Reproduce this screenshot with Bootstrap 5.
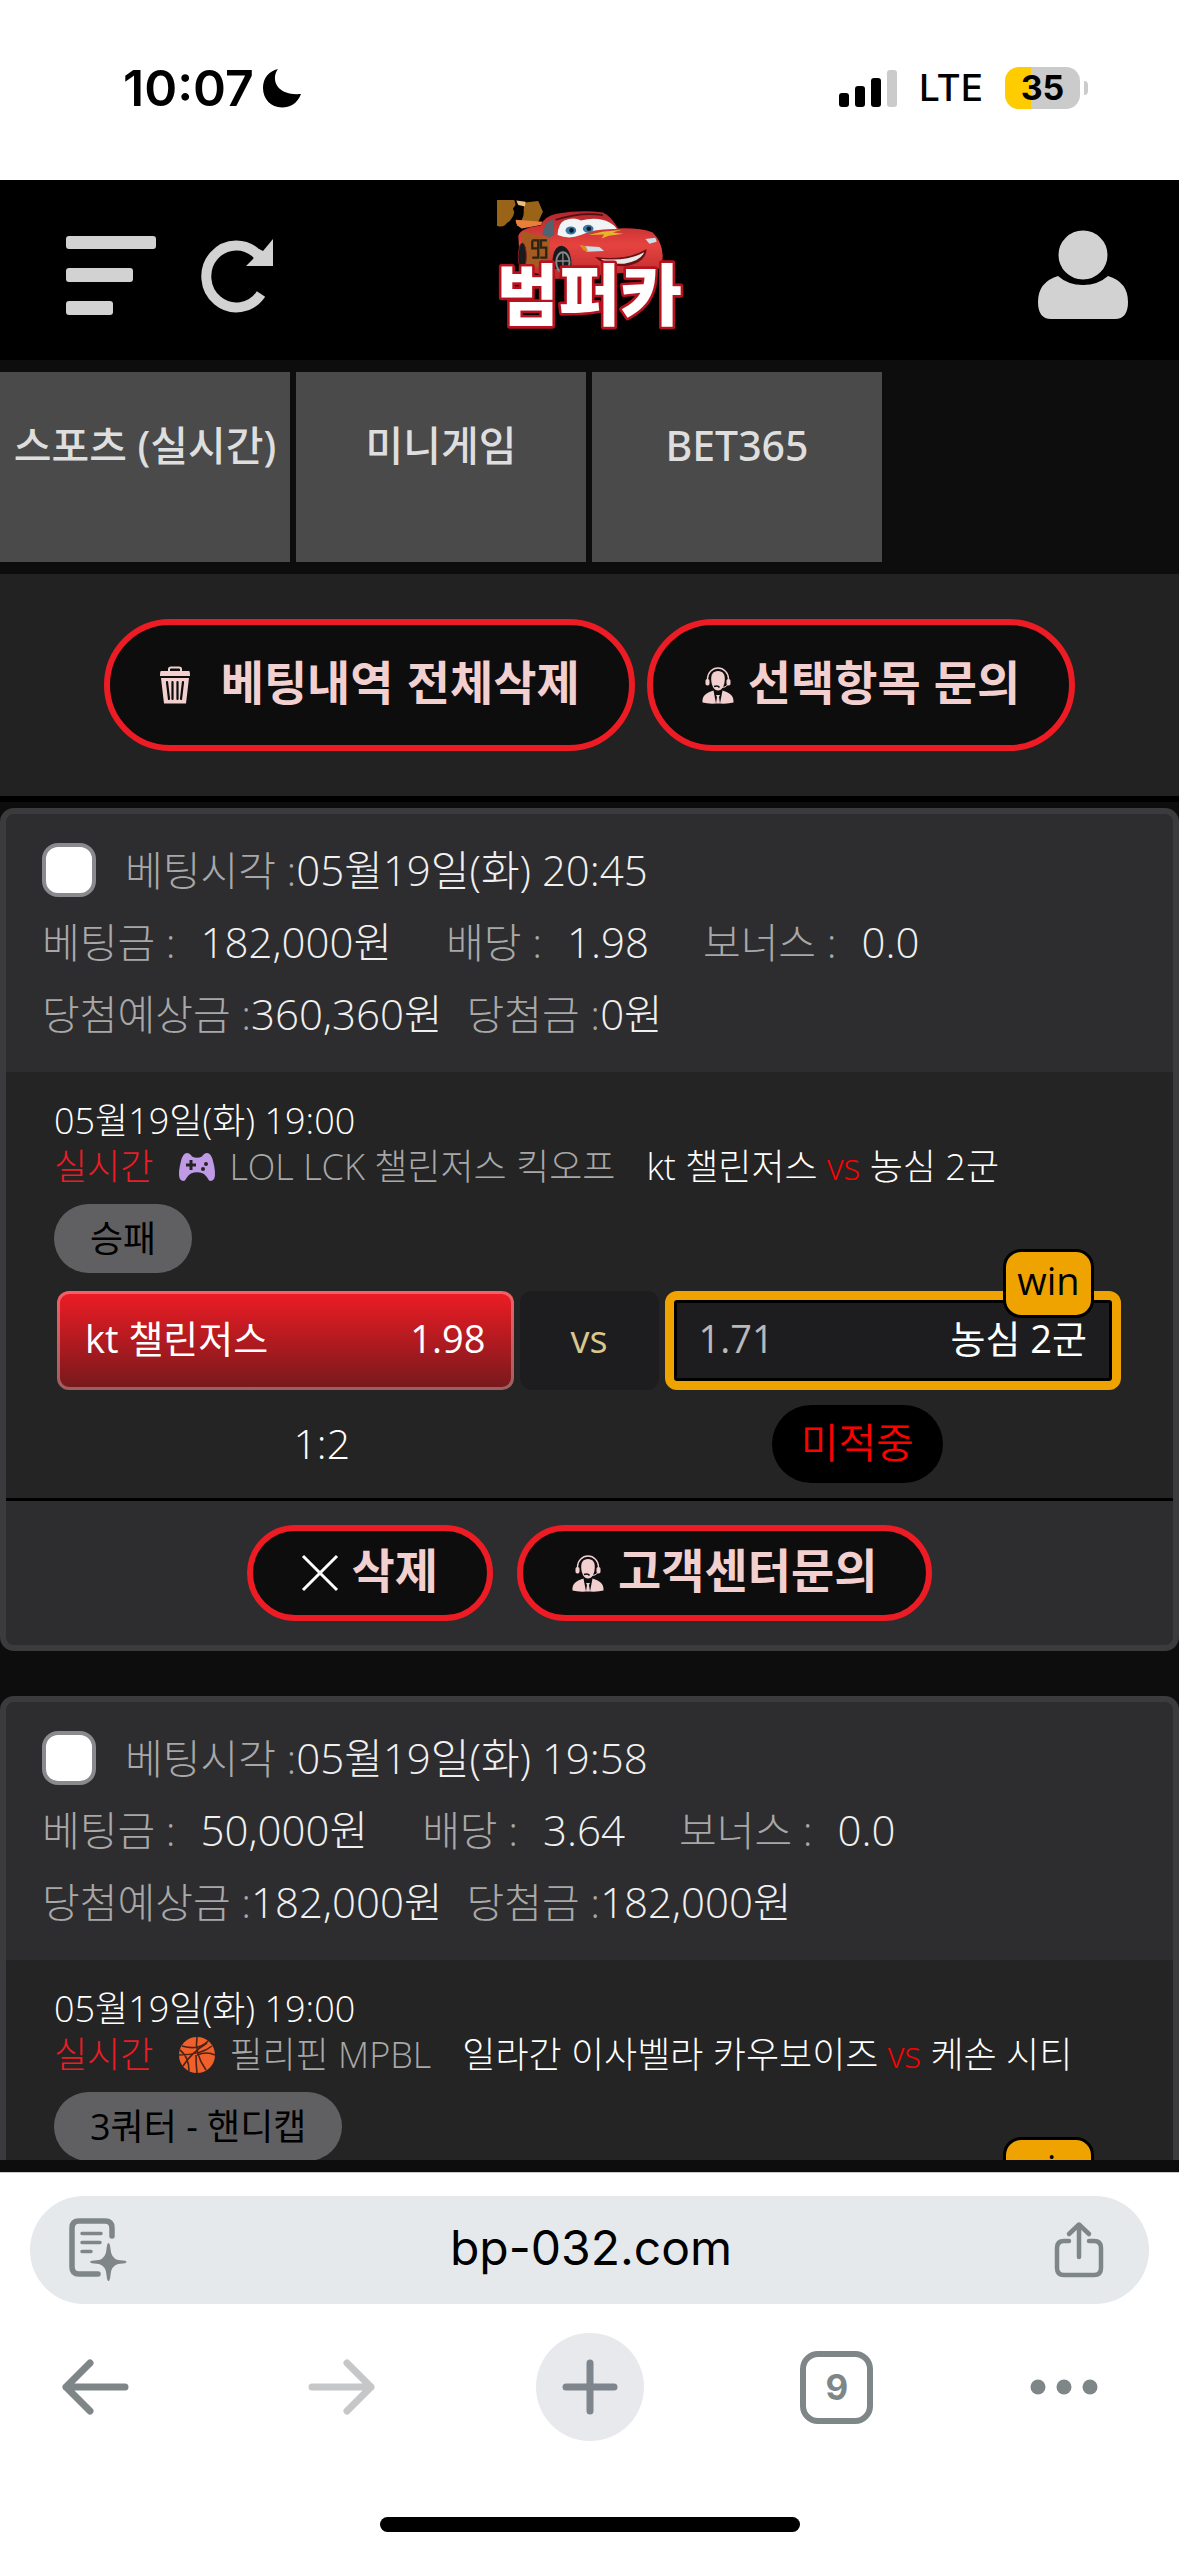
<!doctype html>
<html lang="ko">
<head>
<meta charset="utf-8">
<meta name="viewport" content="width=device-width, initial-scale=1">
<title>베팅내역</title>
<link href="https://cdn.jsdelivr.net/npm/bootstrap@5.3.0/dist/css/bootstrap.min.css" rel="stylesheet">
<style>
  body { font-family: "Open Sans", "Noto Sans CJK KR", sans-serif; background: #0d0d0d; color: #f0f0f0; line-height: 1.2; }
  .sys { font-family: Inter, "Liberation Sans", sans-serif; }
  button { font-family: inherit; }
  .plain { background: none; border: 0; padding: 0; line-height: 0; }
  svg { flex: none; display: block; overflow: visible; }

  .status-bar { height: 180px; padding: 0 91px 4px 123px; color: #000; }
  .clock { font-size: 50px; font-weight: 600; }
  .lte { font-size: 37px; font-weight: 500; margin: 0 22px; }
  .battery { width: 75px; height: 42px; border-radius: 14px; font-size: 34px; font-weight: 700; background: linear-gradient(90deg, #ffcc00 35%, #cbcbcb 35%); }
  .battery-tip { width: 4px; height: 14px; border-radius: 0 4px 4px 0; background: #cbcbcb; }

  .site-head { height: 180px; padding: 10px 51px 0; background: #000; }
  .site-head > div { flex: 1 1 0; }
  .head-left { gap: 45px; }
  .menu-btn { margin-left: 15px; }
  .logo-link { margin-bottom: 22px; }
  .tab-strip { padding: 12px 0; gap: 6px; }
  .tab-strip a { width: 290px; height: 190px; padding-top: 48px; background: #4a4a4a; color: #dedede; font-family: "Noto Sans", "Noto Sans CJK KR", sans-serif; font-size: 41px; font-weight: 500; line-height: 50px; }
  .tools { height: 228px; background: #222; border-bottom: 6px solid #000; gap: 12px; }

  .pill-btn { display: flex; align-items: center; height: 96px; border: 6px solid #ed1c24; border-radius: 66px; background: #0d0d0d; color: #f3d0d0; font-family: "Noto Sans CJK KR", sans-serif; font-size: 47px; font-weight: 700; line-height: 1; padding: 0 49px; gap: 14px; white-space: nowrap; }
  .pill-btn span { padding-bottom: 12px; }
  .pill-btn.tall { height: 132px; }

  .feed { min-height: 0; overflow: hidden; padding-top: 6px; border-bottom: 12px solid #0d0d0d; }
  .slip { flex: none; border: 6px solid #3b3b3d; border-radius: 14px; background: #2d2d2f; margin-bottom: 45px; }
  .slip-head { padding: 20px 36px 22px; font-size: 42px; font-weight: 300; white-space: nowrap; }
  .slip-head > div { height: 72px; display: flex; align-items: center; }
  .slip-head .key { color: #a8a8a8; font-size: 41px; }
  .slip-head .pair { display: flex; align-items: baseline; gap: 25px; margin-right: 54px; }
  .slip-head .pair.tight { gap: 0; margin-right: 24px; }
  .pick { width: 54px; height: 54px; appearance: none; background: #fff; border: 4px solid #8a8a8e; border-radius: 16px; margin-right: 29px; flex: none; }
  .event { background: #242424; padding: 27px 48px 15px; border-bottom: 3px solid #000; }
  .event-line { height: 45px; font-size: 36px; font-weight: 300; color: #fff; white-space: nowrap; line-height: 44px; }
  .live { color: #ed1c24; margin-right: 26px; }
  .league { color: #a8a8a8; margin: 0 31px 0 14px; }
  .red { color: #f00; }
  .market { display: flex; width: fit-content; align-items: center; height: 69px; margin: 15px 0 18px; padding: 0 36px; border-radius: 35px; background: #606063; color: #000; font-size: 36px; font-weight: 400; }
  .odds { display: grid; grid-template-columns: 1fr 139px 1fr; gap: 6px; padding: 0 4px 0 3px; font-size: 38px; }
  .side { position: relative; height: 99px; display: flex; align-items: center; justify-content: space-between; border-radius: 12px; padding: 0 25px 4px; color: #fff; border: 3px solid rgba(255,255,255,.3); white-space: nowrap; font-weight: 400; }
  .side.chosen { background: linear-gradient(#f01c24, #74191c) border-box; }
  .side.winner { border: 9px solid #eea300; background: #1d1d1f; box-shadow: inset 0 0 0 3px #000; }
  .side.winner .rate { color: #b9b9b9; }
  .versus { border-radius: 12px; background: #1d1d1f; color: #d9c78c; font-weight: 400; padding-bottom: 4px; }
  .win-tag { position: absolute; top: -51px; right: 18px; height: 69px; width: 91px; border: 3px solid #000; border-radius: 18px; background: #eea300; color: #000; display: flex; align-items: center; justify-content: center; font-size: 38px; padding-bottom: 6px; }
  .outcome { margin-top: 15px; font-size: 41px; font-weight: 300; color: #fff; }
  .miss { height: 78px; padding: 0 29px 2px; border-radius: 39px; background: #000; color: #f00; font-weight: 350; }
  .slip-foot { padding: 24px 0; gap: 24px; }

  .chrome { background: #fff; color: #000; border-top: 1px solid #c8c8c8; padding: 23px 30px 24px; }
  .address { height: 108px; border-radius: 54px; background: #e5e9ec; padding: 0 45px 0 38px; }
  .address input { min-width: 0; border: 0; background: none; font-size: 48px; color: #000; text-align: center; outline: 0; padding: 0 0 4px; }
  .chrome-nav { padding: 29px 11px 0; }
  .chrome-nav > div { width: 108px; height: 108px; display: flex; align-items: center; justify-content: center; }
  .chrome-nav > div:last-child { justify-content: flex-start; }
  .new-tab { width: 108px; height: 108px; border-radius: 50%; background: #e8e9ed; }
  .tab-count { width: 73px; height: 73px; border: 6px solid #7f8688; border-radius: 18px; color: #7f8688; font-size: 35px; font-weight: 700; background: none; padding: 0; }
  .home-bar { width: 420px; height: 15px; border-radius: 8px; background: #000; margin: 76px auto 0; }
</style>
<script src="https://cdn.jsdelivr.net/npm/bootstrap@5.3.0/dist/js/bootstrap.bundle.min.js"></script>
</head>
<body class="d-flex flex-column vh-100 overflow-hidden">

<svg width="0" height="0" class="position-absolute" aria-hidden="true">
  <symbol id="agent" viewBox="0 0 32 37">
    <g fill="none" stroke="currentColor"><path d="M5.500 14 V12 A10.500 11 0 0 1 26.500 12 V14" stroke-width="1.300"/><path d="M26 17.500 Q24 21 18 20.500" stroke-width="1"/></g>
    <rect x="3.500" y="12" width="4" height="6.500" rx="1.800" fill="currentColor"/><rect x="24.500" y="12" width="4" height="6.500" rx="1.800" fill="currentColor"/>
    <path fill="currentColor" d="M16 4 C11 4 9 7.500 9.200 12.500 C9.500 19 12 23.500 16 23.500 C20 23.500 22.500 19 22.800 12.500 C23 7.500 21 4 16 4Z"/>
    <path d="M12 19.500 Q16 18 17.500 20.500" stroke="#0d0d0d" stroke-width="1.500" fill="none"/>
    <path fill="currentColor" d="M11.500 23.500 L14 36.500 Q6 37 .5 35.500 C0 29 3.500 26 11.500 23.500Z M20.500 23.500 L18 36.500 Q26 37 31.500 35.500 C32 29 28.500 26 20.500 23.500Z M14 28 H18 L17 30 L18 36.500 H14 L15 30Z"/>
  </symbol>
</svg>

<div class="status-bar sys bg-white d-flex align-items-center justify-content-between flex-shrink-0">
  <div class="d-flex align-items-center gap-2">
    <span class="clock">10:07</span>
    <svg width="40" height="40" viewBox="0 0 40 40"><path d="M16 1 C9 10 13 28 39 26 C35 36 28 39.500 20 39.500 C9 39.500 1 31 1 20 C1 10 7 3 16 1Z"/></svg>
  </div>
  <div class="d-flex align-items-center">
    <svg width="58" height="38" viewBox="0 0 58 38"><rect y="24" width="10" height="14" rx="3"/><rect x="16" y="17" width="10" height="21" rx="3"/><rect x="32" y="9" width="10" height="29" rx="3"/><rect x="48" y="1" width="10" height="37" rx="3" fill="#cbcbcb"/></svg>
    <span class="lte">LTE</span>
    <span class="battery d-flex align-items-center justify-content-center">35</span>
    <span class="battery-tip ms-1"></span>
  </div>
</div>

<header class="site-head d-flex align-items-center flex-shrink-0">
  <div class="head-left d-flex align-items-center">
    <button class="plain menu-btn" type="button" aria-label="메뉴"><svg width="90" height="80" viewBox="0 0 90 80" fill="#d2d2d2"><rect y="1" width="90" height="13" rx="3"/><rect y="33" width="67" height="14" rx="3"/><rect y="66" width="47" height="14" rx="3"/></svg></button>
    <button class="plain" type="button" aria-label="새로고침"><svg width="72" height="74" viewBox="0 0 72 74"><path d="M60 56 A30 31 0 1 1 57 17" fill="none" stroke="#d2d2d2" stroke-width="10"/><path d="M72 1 V28 H45 L52 21 L58 11 L62 13Z" fill="#d2d2d2"/></svg></button>
  </div>
  <a href="#" class="logo-link" aria-label="범퍼카"><svg width="188" height="130" viewBox="45 60 565 390">
    <defs><linearGradient id="paint" x2="0" y2="1"><stop stop-color="#b3262c"/><stop offset=".5" stop-color="#e6433f"/><stop offset="1" stop-color="#ba2a2b"/></linearGradient></defs>
    <path d="M48 63 H100 L104 78 L96 88 L100 100 Q94 122 78 132 Q66 148 48 140Z M132 70 L172 66 L186 98 L172 128 L148 144 L106 140 Q132 120 128 92Z" fill="#9a6418"/>
    <path d="M106 64 L134 68 L132 82 L112 78Z" fill="#f0bd7a"/>
    <path d="M104 122 L185 128 L180 138 L122 148 Q104 140 104 122Z" fill="#e8803c"/>
    <path d="M112 170 Q120 146 178 140 Q190 112 226 104 Q300 92 366 100 Q388 108 412 148 Q480 146 516 160 Q546 190 546 232 Q546 262 530 272 L226 300 L118 270Z" fill="url(#paint)"/>
    <path d="M124 156 Q170 170 205 178 L206 216 L200 268 L138 262 Q116 210 124 156Z" fill="#a65a20"/>
    <path d="M154 184 H172 V236 H154 M154 184 V208 H172 M198 184 H180 V206 H196 V236 H178" fill="none" stroke="#2b2415" stroke-width="7"/>
    <path d="M184 166 Q190 128 218 120 L220 168 L204 176Z" fill="#50636e"/>
    <path d="M224 122 Q300 98 366 108" fill="none" stroke="#4a1216" stroke-width="5"/>
    <path d="M230 168 Q232 132 250 124 Q280 112 300 124 Q352 112 386 130 Q402 138 408 150 Q340 148 300 168 Q264 182 230 168Z" fill="#f1f4f5"/>
    <ellipse cx="270" cy="154" rx="16" ry="12" fill="#3a78a8"/><circle cx="272" cy="154" r="7" fill="#101a24"/><ellipse cx="322" cy="149" rx="16" ry="12" fill="#3a78a8"/><circle cx="324" cy="149" r="7" fill="#101a24"/>
    <path d="M322 168 L364 158 L424 152 L396 160 L428 164 L384 170 L362 178 L370 166Z" fill="#e5b52c"/>
    <path d="M298 200 L356 204 L370 216 L318 218Z" fill="#cfdde6"/><path d="M298 198 L314 202 L322 217 L308 214Z" fill="#d98b1d"/>
    <path d="M494 180 L524 176 L528 188 L506 194Z" fill="#cfdde6"/>
    <path d="M342 234 Q440 246 498 210 Q494 254 430 262 Q372 264 342 234Z" fill="#6b1115"/><path d="M360 240 Q440 248 490 220 Q480 246 430 254 Q380 256 360 240Z" fill="#e8e8e8"/>
    <path d="M214 270 Q212 202 242 200 Q274 206 272 270Z" fill="#181a1c"/><ellipse cx="246" cy="250" rx="20" ry="30" fill="none" stroke="#868a8d" stroke-width="6"/><path d="M246 222 V275 M228 246 H265" stroke="#868a8d" stroke-width="4"/>
    <ellipse cx="124" cy="232" rx="12" ry="40" fill="#181a1c" stroke="#7b1c20" stroke-width="3"/>
    <text x="47" y="422" font-family="Noto Sans CJK KR,sans-serif" font-weight="900" font-size="202" stroke-linejoin="round" fill="#fff" stroke="#b8121f" stroke-width="16" paint-order="stroke">범퍼카</text>
  </svg></a>
  <div class="d-flex justify-content-end">
    <button class="plain" type="button" aria-label="내 정보"><svg width="90" height="90" viewBox="0 0 90 90" fill="#d2d2d2"><path d="M20 46 Q30 55 45 55 Q60 55 70 46 Q90 52 90 72 Q90 89 77 89 H13 Q0 89 0 72 Q0 52 20 46Z"/><circle cx="45" cy="25" r="27" stroke="#000" stroke-width="5"/></svg></button>
  </div>
</header>

<nav class="tab-strip d-flex flex-shrink-0">
  <a href="#" class="text-decoration-none text-center text-nowrap">스포츠 (실시간)</a>
  <a href="#" class="text-decoration-none text-center">미니게임</a>
  <a href="#" class="text-decoration-none text-center">BET365</a>
</nav>

<div class="tools d-flex align-items-center justify-content-center flex-shrink-0">
  <button type="button" class="pill-btn tall"><svg width="32" height="38" viewBox="0 0 32 38" class="me-3"><path d="M10 5 V3 Q10 1.500 12 1.500 H20 Q22 1.500 22 3 V5" fill="none" stroke="currentColor" stroke-width="2"/><path d="M2 5 H30 Q31 5 31 10 H1 Q1 5 2 5Z M2 12 H30 L27 37.500 H5Z" fill="currentColor"/><path d="M8 16 L10 33 M13.500 16 V33 M18.500 16 V33 M24 16 L22 33" stroke="#0d0d0d" stroke-width="2.200" stroke-linecap="round"/></svg><span>베팅내역 전체삭제</span></button>
  <button type="button" class="pill-btn tall"><svg width="32" height="37"><use href="#agent"/></svg><span>선택항목 문의</span></button>
</div>

<main class="feed flex-grow-1 d-flex flex-column">
  <article class="slip">
    <div class="slip-head">
      <div><input type="checkbox" class="pick" id="p1"><label for="p1"><span class="key">베팅시각 :</span>05월19일(화) 20:45</label></div>
      <div><span class="pair"><span class="key">베팅금 :</span><span>182,000원</span></span><span class="pair"><span class="key">배당 :</span><span>1.98</span></span><span class="pair"><span class="key">보너스 :</span><span>0.0</span></span></div>
      <div><span class="pair tight"><span class="key">당첨예상금 :</span><span>360,360원</span></span><span class="pair tight"><span class="key">당첨금 :</span><span>0원</span></span></div>
    </div>
    <div class="event">
      <div class="event-line">05월19일(화) 19:00</div>
      <div class="event-line d-flex align-items-center"><span class="live">실시간</span><svg width="36" height="28" viewBox="0 0 36 28"><path d="M8 0 Q11 0 13 3.500 Q18 6 23 3.500 Q25 0 28 0 Q32 0 34 8 Q37 19 35.500 25 Q34 29 30 27.500 Q27 22 24 20.500 Q18 18 12 20.500 Q9 22 6 27.500 Q2 29 .5 25 Q-1 19 2 8 Q4 0 8 0Z" fill="#bf9be6"/><path d="M12 7 V17 M7 12 H17" stroke="#242424" stroke-width="3"/><circle cx="27" cy="11" r="2" fill="#242424"/><circle cx="24" cy="16" r="2" fill="#242424"/></svg><span class="league">LOL LCK 챌린저스 킥오프</span><span>kt 챌린저스 <span class="red">vs</span> 농심 2군</span></div>
      <span class="market">승패</span>
      <div class="odds">
        <button type="button" class="side chosen"><span>kt 챌린저스</span><span>1.98</span></button>
        <div class="versus d-flex align-items-center justify-content-center">vs</div>
        <button type="button" class="side winner"><span class="rate">1.71</span><span>농심 2군</span><span class="win-tag">win</span></button>
      </div>
      <div class="outcome row g-0 align-items-center text-center">
        <div class="col-6">1:2</div>
        <div class="col-6 d-flex justify-content-center"><span class="miss d-flex align-items-center">미적중</span></div>
      </div>
    </div>
    <div class="slip-foot d-flex justify-content-center">
      <button type="button" class="pill-btn"><svg width="36" height="36" viewBox="0 0 36 36"><path d="M1 1 L35 35 M35 1 L1 35" stroke="#fff" stroke-width="3"/></svg><span>삭제</span></button>
      <button type="button" class="pill-btn"><svg width="32" height="37"><use href="#agent"/></svg><span>고객센터문의</span></button>
    </div>
  </article>

  <article class="slip">
    <div class="slip-head">
      <div><input type="checkbox" class="pick" id="p2"><label for="p2"><span class="key">베팅시각 :</span>05월19일(화) 19:58</label></div>
      <div><span class="pair"><span class="key">베팅금 :</span><span>50,000원</span></span><span class="pair"><span class="key">배당 :</span><span>3.64</span></span><span class="pair"><span class="key">보너스 :</span><span>0.0</span></span></div>
      <div><span class="pair tight"><span class="key">당첨예상금 :</span><span>182,000원</span></span><span class="pair tight"><span class="key">당첨금 :</span><span>182,000원</span></span></div>
    </div>
    <div class="event">
      <div class="event-line">05월19일(화) 19:00</div>
      <div class="event-line d-flex align-items-center"><span class="live">실시간</span><svg width="36" height="36" viewBox="0 0 36 36"><circle cx="18" cy="18" r="18" fill="#f0602b"/><g fill="none" stroke="#4a2216" stroke-width="1.600"><path d="M18 0 Q15 16 27 33 M3 9 Q20 14 29 4 M0 18 Q22 18 33 9 M4 29 Q12 16 28 6 M10 34 Q10 20 1 13 M17 18 Q17 28 18 36 M18 18 Q28 14 36 18"/></g></svg><span class="league">필리핀 MPBL</span><span>일라간 이사벨라 카우보이즈 <span class="red">vs</span> 케손 시티</span></div>
      <span class="market">3쿼터 - 핸디캡</span>
      <div class="odds">
        <div class="side"></div>
        <div class="versus"></div>
        <div class="side winner"><span class="win-tag">win</span></div>
      </div>
    </div>
  </article>
</main>

<footer class="chrome sys flex-shrink-0">
  <div class="address d-flex align-items-center">
    <button class="plain" type="button" aria-label="읽기 도구"><svg width="60" height="64" viewBox="0 0 60 64"><g fill="none" stroke="#7f8688" stroke-linecap="round"><path d="M44 18 V10 Q44 3 37 3 H11 Q4 3 4 10 V49 Q4 56 11 56 H30" stroke-width="5.500"/><path d="M14 15.500 H33 M14 24.500 H32 M14 33.500 H23" stroke-width="3.500"/></g><path d="M40.500 25 Q42 25 42.500 31 Q43 40 50 42 L57 42.800 Q60 44 57 45.200 L50 46 Q43 48 42.500 57 Q42 63 40.500 63 Q39 63 38.500 57 Q38 48 31 46 L24 45.200 Q20 44 24 42.800 L31 42 Q38 40 38.500 31 Q39 25 40.500 25Z" fill="#7f8688"/></svg></button>
    <input class="flex-grow-1" type="text" value="bp-032.com" aria-label="주소">
    <button class="plain" type="button" aria-label="공유"><svg width="50" height="56" viewBox="0 0 50 56" fill="none" stroke="#7f8688" stroke-width="4.500" stroke-linecap="round" stroke-linejoin="round"><path d="M15 19 H10 Q3 19 3 26 V46 Q3 53 10 53 H40 Q47 53 47 46 V26 Q47 19 40 19 H35 M25 35 V3 M15 12 L25 2.500 L35 12"/></svg></button>
  </div>
  <div class="chrome-nav d-flex align-items-center justify-content-between">
    <div><button class="plain" type="button" aria-label="뒤로"><svg width="68" height="56" viewBox="0 0 68 56" fill="none" stroke="#7f8688" stroke-width="7" stroke-linecap="round" stroke-linejoin="round"><path d="M64 28 H5 M29 4 L5 28 L29 52"/></svg></button></div>
    <div><button class="plain" type="button" aria-label="앞으로"><svg width="68" height="56" viewBox="0 0 68 56" fill="none" stroke="#c6c7c8" stroke-width="7" stroke-linecap="round" stroke-linejoin="round"><path d="M4 28 H63 M39 4 L63 28 L39 52"/></svg></button></div>
    <div><button class="plain new-tab d-flex align-items-center justify-content-center" type="button" aria-label="새 탭"><svg width="56" height="56" viewBox="0 0 56 56" stroke="#7f858c" stroke-width="7" stroke-linecap="round"><path d="M28 4 V52 M4 28 H52"/></svg></button></div>
    <div><button class="tab-count" type="button">9</button></div>
    <div><button class="plain" type="button" aria-label="더보기"><svg width="68" height="16" viewBox="0 0 68 16" fill="#7f8688"><circle cx="8" cy="8" r="7.500"/><circle cx="34" cy="8" r="7.500"/><circle cx="60" cy="8" r="7.500"/></svg></button></div>
  </div>
  <div class="home-bar"></div>
</footer>
</body>
</html>
